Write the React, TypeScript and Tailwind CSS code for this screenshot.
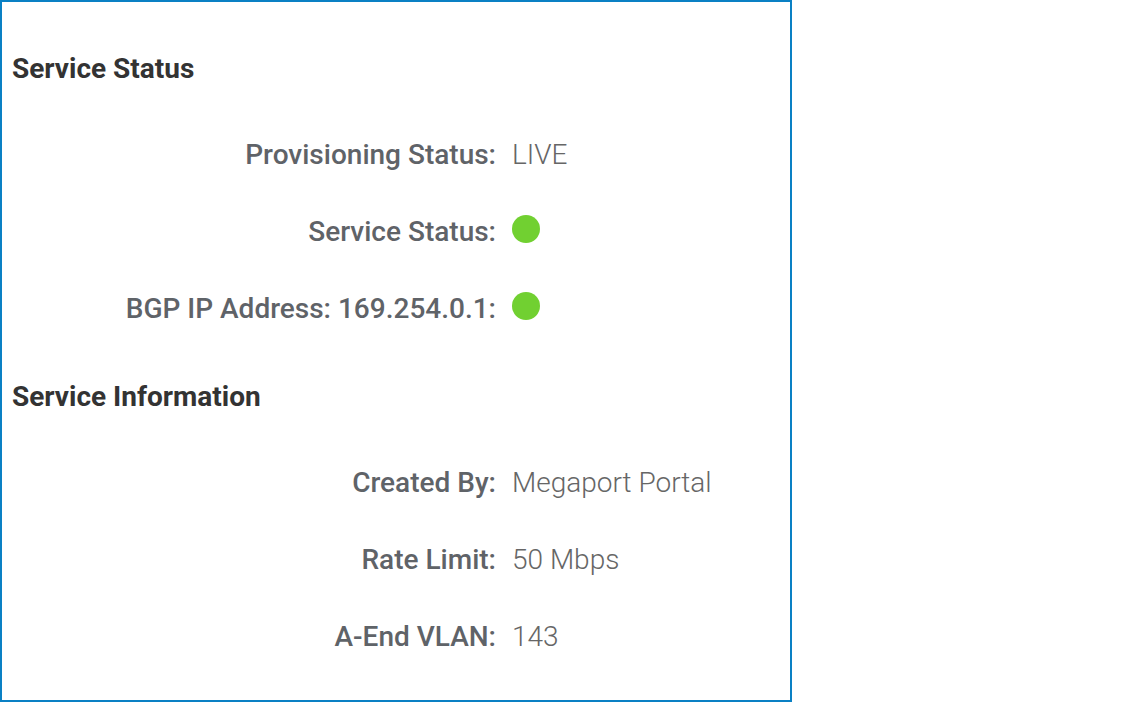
const statusRows = [
  { label: 'Provisioning Status:', value: 'LIVE' },
  { label: 'Service Status:', dot: true },
  { label: 'BGP IP Address: 169.254.0.1:', dot: true },
];

const infoRows = [
  { label: 'Created By:', value: 'Megaport Portal' },
  { label: 'Rate Limit:', value: '50 Mbps' },
  { label: 'A-End VLAN:', value: '143' },
];

type Row = { label: string; value?: string; dot?: boolean };

function DetailRow({ row }: { row: Row }) {
  return (
    <div className="flex items-center h-[77px]">
      <div className="w-[484px] text-right text-[28px] leading-[32px] font-medium text-[#5f6368]">{row.label}</div>
      <div className="ml-4 flex items-center">
        {row.dot ? (
          <span className="block w-[28px] h-[28px] rounded-full bg-[#71d031] -translate-y-[3px]" />
        ) : (
          <span className="text-[28px] leading-[32px] font-light text-[#666666]">{row.value}</span>
        )}
      </div>
    </div>
  );
}

export default function App() {
  return (
    <div className="bg-white w-[1129px] h-[702px] font-['Roboto',sans-serif]">
      <div className="w-[792px] h-[702px] border-2 border-[#0a80c4] pl-[10px] pt-[51px]">
        {/* Service Status */}
        <h2 className="text-[28px] leading-[32px] font-bold text-[#333333]">Service Status</h2>
        <div className="mt-[31px]">
          {statusRows.map((r) => (
            <DetailRow key={r.label} row={r} />
          ))}
        </div>

        {/* Service Information */}
        <h2 className="mt-[34px] text-[28px] leading-[32px] font-bold text-[#333333]">Service Information</h2>
        <div className="mt-[31px]">
          {infoRows.map((r) => (
            <DetailRow key={r.label} row={r} />
          ))}
        </div>
      </div>
    </div>
  );
}
